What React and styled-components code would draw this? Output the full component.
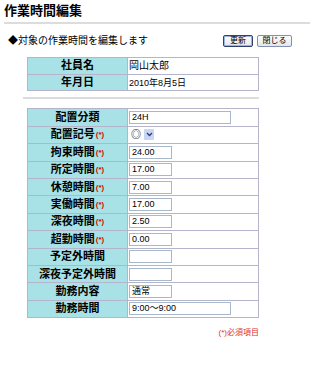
import React from "react";
import styled, { createGlobalStyle } from "styled-components";

const Global = createGlobalStyle`
  html, body { margin: 0; padding: 0; background: #fff; }
  body { font-family: "Liberation Sans", "Noto Sans CJK JP", sans-serif; color: #000; }
  * { box-sizing: border-box; }
`;

const Page = styled.div`
  width: 320px;
  height: 368px;
  padding: 2px 10px 0 4px;
`;

const Title = styled.h1`
  margin: 0;
  font-size: 13px;
  line-height: 17px;
  font-weight: bold;
`;

const Rule = styled.div`
  height: 2px;
  background: #dcdcdc;
  margin: ${(p) => p.$m};
  width: ${(p) => p.$w};
`;

const Toolbar = styled.div`
  display: flex;
  align-items: center;
  padding: 0 18px 0 4px;
  margin-top: 10px;
  height: 14px;
`;

const Lead = styled.div`
  flex: 1;
  font-size: 10px;
  line-height: 14px;
`;

const Btn = styled.button`
  font-family: "Liberation Sans", "Noto Sans CJK JP", sans-serif;
  font-size: 8px;
  height: 12px;
  padding: 0;
  width: ${(p) => p.$w}px;
  margin-left: 4px;
  line-height: 10px;
  background: linear-gradient(#fdfdfd, #e4e6ec);
  border: 1px solid ${(p) => (p.$primary ? "#304070" : "#8090b0")};
  border-radius: 2px;
  box-shadow: ${(p) => (p.$primary ? "inset 0 0 0 1px #9cb4e0" : "none")};
  color: #000;
`;

const Table = styled.table`
  border-collapse: collapse;
  width: 232px;
  margin-left: 23px;
  margin-top: 9px;
  table-layout: fixed;
`;

const Row = styled.tr`
  height: ${(p) => p.$h}px;
`;

const Label = styled.th`
  width: 100px;
  background: #a8e2e6;
  border: 1px solid #b4b4cc;
  font-size: 11px;
  font-weight: bold;
  text-align: center;
  padding: 0;
  line-height: 13px;
  white-space: nowrap;
`;

const Req = styled.span`
  color: #e00000;
  font-size: 8px;
  font-weight: bold;
  vertical-align: 1px;
  margin-left: 1px;
`;

const Value = styled.td`
  border: 1px solid #b4b4cc;
  font-size: 10px;
  padding: 0 0 0 1px;
  line-height: 13px;
  white-space: nowrap;
`;

const Small = styled.span`
  font-size: 9px;
`;

const Input = styled.div`
  width: ${(p) => p.$w}px;
  height: 13px;
  border: 1px solid #a8b8cc;
  font-size: 9px;
  line-height: 11px;
  padding-left: 2px;
  background: #fff;
`;

const Select = styled.div`
  display: flex;
  align-items: center;
  width: 25px;
  height: 13px;
  font-size: 10px;
  padding-left: 2px;
  gap: 3px;
`;

const Arrow = styled.span`
  display: inline-flex;
  align-items: center;
  justify-content: center;
  width: 10px;
  height: 11px;
  background: #c8d6f4;
  border-radius: 1px;
`;

const Note = styled.div`
  text-align: right;
  color: #e03030;
  font-size: 8px;
  width: 255px;
  margin-top: 8px;
`;

const rows = [
  { label: "配置分類", input: "24H", w: 102 },
  { label: "配置記号", req: true, select: true },
  { label: "拘束時間", req: true, input: "24.00", w: 43 },
  { label: "所定時間", req: true, input: "17.00", w: 43 },
  { label: "休憩時間", req: true, input: "7.00", w: 43 },
  { label: "実働時間", req: true, input: "17.00", w: 43 },
  { label: "深夜時間", req: true, input: "2.50", w: 43 },
  { label: "超勤時間", req: true, input: "0.00", w: 43 },
  { label: "予定外時間", input: "", w: 43 },
  { label: "深夜予定外時間", input: "", w: 43 },
  { label: "勤務内容", input: "通常", w: 43 },
  { label: "勤務時間", input: "9:00～9:00", w: 102 },
];

export default function App() {
  return (
    <Page>
      <Global />
      <Title>作業時間編集</Title>
      <Rule $m="3px 0 0 0" $w="306px" />
      <Toolbar>
        <Lead>◆対象の作業時間を編集します</Lead>
        <Btn $primary $w={30}>更新</Btn>
        <Btn $w={35}>閉じる</Btn>
      </Toolbar>
      <Table>
        <tbody>
          <Row $h={16.7}>
            <Label>社員名</Label>
            <Value>岡山太郎</Value>
          </Row>
          <Row $h={16.7}>
            <Label>年月日</Label>
            <Value><Small>2010年8月5日</Small></Value>
          </Row>
        </tbody>
      </Table>
      <Rule $m="6px 0 0 19px" $w="236px" />
      <Table>
        <tbody>
          {rows.map((r) => (
            <Row key={r.label} $h={17.4}>
              <Label>
                {r.label}
                {r.req && <Req>(*)</Req>}
              </Label>
              <Value>
                {r.select ? (
                  <Select>
                    <span>◎</span>
                    <Arrow>
                      <svg width="7" height="5" viewBox="0 0 7 5">
                        <path d="M1 1 L3.5 3.5 L6 1" fill="none" stroke="#2a3a80" strokeWidth="1.3" />
                      </svg>
                    </Arrow>
                  </Select>
                ) : (
                  <Input $w={r.w}>{r.input}</Input>
                )}
              </Value>
            </Row>
          ))}
        </tbody>
      </Table>
      <Note>(*)必須項目</Note>
    </Page>
  );
}
